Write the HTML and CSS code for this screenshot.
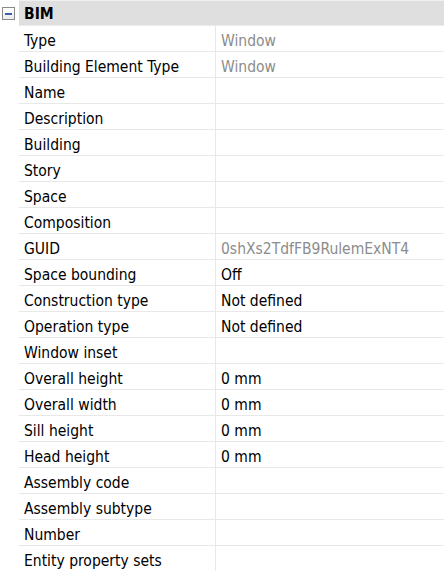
FILE: index.html
```html
<!DOCTYPE html>
<html>
<head>
<meta charset="utf-8">
<link rel="stylesheet" href="styles.css">
</head>
<body>
<div class="grid">
  <div class="header">
    <div class="gutter"><span class="toggle"><span class="bar"></span></span></div>
    <div class="title">BIM</div>
  </div>
  <div class="row"><div class="gutter"></div><div class="label">Type</div><div class="value muted">Window</div></div>
  <div class="row"><div class="gutter"></div><div class="label">Building Element Type</div><div class="value muted">Window</div></div>
  <div class="row"><div class="gutter"></div><div class="label">Name</div><div class="value"></div></div>
  <div class="row"><div class="gutter"></div><div class="label">Description</div><div class="value"></div></div>
  <div class="row"><div class="gutter"></div><div class="label">Building</div><div class="value"></div></div>
  <div class="row"><div class="gutter"></div><div class="label">Story</div><div class="value"></div></div>
  <div class="row"><div class="gutter"></div><div class="label">Space</div><div class="value"></div></div>
  <div class="row"><div class="gutter"></div><div class="label">Composition</div><div class="value"></div></div>
  <div class="row"><div class="gutter"></div><div class="label">GUID</div><div class="value muted">0shXs2TdfFB9RulemExNT4</div></div>
  <div class="row"><div class="gutter"></div><div class="label">Space bounding</div><div class="value">Off</div></div>
  <div class="row"><div class="gutter"></div><div class="label">Construction type</div><div class="value">Not defined</div></div>
  <div class="row"><div class="gutter"></div><div class="label">Operation type</div><div class="value">Not defined</div></div>
  <div class="row"><div class="gutter"></div><div class="label">Window inset</div><div class="value"></div></div>
  <div class="row"><div class="gutter"></div><div class="label">Overall height</div><div class="value">0 mm</div></div>
  <div class="row"><div class="gutter"></div><div class="label">Overall width</div><div class="value">0 mm</div></div>
  <div class="row"><div class="gutter"></div><div class="label">Sill height</div><div class="value">0 mm</div></div>
  <div class="row"><div class="gutter"></div><div class="label">Head height</div><div class="value">0 mm</div></div>
  <div class="row"><div class="gutter"></div><div class="label">Assembly code</div><div class="value"></div></div>
  <div class="row"><div class="gutter"></div><div class="label">Assembly subtype</div><div class="value"></div></div>
  <div class="row"><div class="gutter"></div><div class="label">Number</div><div class="value"></div></div>
  <div class="row"><div class="gutter"></div><div class="label">Entity property sets</div><div class="value"></div></div>
</div>
</body>
</html>
```
FILE: styles.css
```css
html, body {
  margin: 0;
  padding: 0;
  background: #ffffff;
}
body {
  font-family: "DejaVu Sans Condensed", "DejaVu Sans", sans-serif;
  font-size: 15.5px;
  color: #000;
  overflow: hidden;
}
.grid {
  width: 444px;
  display: flex;
  flex-direction: column;
}
.header {
  display: grid;
  grid-template-columns: 19px 1fr;
  height: 26px;
}
.header .title {
  background: #dfdfdf;
  border-top: 1px solid #f0f0f0;
  border-bottom: 1px solid #ececec;
  font-weight: bold;
  padding-left: 5px;
  padding-top: 2px;
  display: flex;
  align-items: center;
  box-sizing: border-box;
}
.gutter {
  background: #fff;
  position: relative;
}
.toggle {
  position: absolute;
  left: 2px;
  top: 7px;
  width: 11px;
  height: 11px;
  border: 1px solid #8a8a8a;
  background: linear-gradient(#ffffff, #ececec);
  display: flex;
  align-items: center;
  justify-content: center;
}
.toggle .bar {
  width: 7px;
  height: 2px;
  background: #3d5ea8;
}
.row {
  display: grid;
  grid-template-columns: 19px 197px 1fr;
  height: 26px;
}
.row .label,
.row .value {
  border-bottom: 1px solid #e8e8e8;
  display: flex;
  align-items: center;
  white-space: nowrap;
  box-sizing: border-box;
  padding-top: 5px;
}
.row .label {
  padding-left: 5px;
  border-right: 1px solid #e8e8e8;
}
.row .value {
  padding-left: 5px;
}
.muted {
  color: #8c8c8c;
}
```
